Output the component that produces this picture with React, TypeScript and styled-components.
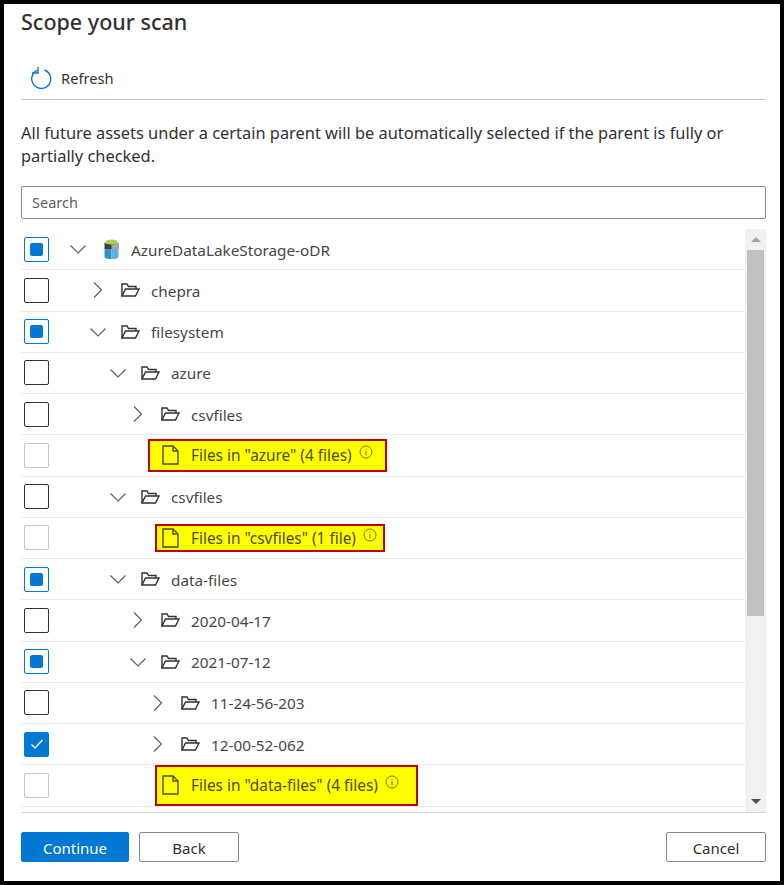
import React from "react";
import styled, { createGlobalStyle } from "styled-components";

const GlobalStyle = createGlobalStyle`
  html, body {
    margin: 0;
    padding: 0;
    background: #000;
  }
  body {
    font-family: "Noto Sans", "Open Sans", "Liberation Sans", sans-serif;
    color: #323130;
  }
`;

const Frame = styled.div`
  box-sizing: border-box;
  width: 784px;
  height: 885px;
  border: 4px solid #000;
  background: #fff;
  display: flex;
  flex-direction: column;
  padding: 0 14px 0 17px;
  overflow: hidden;
`;

const Title = styled.h1`
  margin: 0;
  height: 37px;
  font-size: 21.5px;
  line-height: 35px;
  font-weight: 500;
  color: #323130;
`;

const Toolbar = styled.div`
  display: flex;
  align-items: center;
  gap: 9px;
  height: 59px;
  padding: 16px 0 0 9px;
  border-bottom: 1px solid #c8c6c4;
  box-sizing: border-box;
  font-size: 14.7px;
  color: #323130;
`;

const Description = styled.p`
  margin: 21px 0 19px;
  font-size: 16.4px;
  line-height: 23px;
  color: #323130;
`;

const SearchInput = styled.div`
  box-sizing: border-box;
  height: 33px;
  border: 1px solid #8a8886;
  border-radius: 2px;
  padding-left: 10px;
  font-size: 14.5px;
  line-height: 31px;
  color: #605e5c;
`;

const TreeArea = styled.div`
  display: flex;
  margin-top: 10px;
  height: 583px;
`;

const Rows = styled.div`
  flex: 1;
`;

const Row = styled.div`
  box-sizing: border-box;
  height: 41.25px;
  border-bottom: 1px solid #edebe9;
  display: flex;
  align-items: center;
  padding-left: 3px;
`;

const Check = styled.span<{ $state: "off" | "partial" | "on" | "disabled" }>`
  box-sizing: border-box;
  flex: none;
  width: 25px;
  height: 25px;
  border-radius: 2px;
  display: flex;
  align-items: center;
  justify-content: center;
  border: 1px solid
    ${(p) =>
      p.$state === "off"
        ? "#323130"
        : p.$state === "disabled"
          ? "#c8c6c4"
          : "#0078d4"};
  background: ${(p) => (p.$state === "on" ? "#0078d4" : "#fff")};
`;

const PartialMark = styled.span`
  width: 13px;
  height: 13px;
  border-radius: 2px;
  background: #0078d4;
`;

const NodeBody = styled.div<{ $depth: number }>`
  display: flex;
  align-items: center;
  padding-left: ${(p) => 24 + p.$depth * 20}px;
  min-width: 0;
`;

const Toggle = styled.span`
  flex: none;
  width: 10px;
  height: 16px;
  margin-right: 18px;
  display: flex;
  align-items: center;
  justify-content: center;
  svg {
    flex: none;
  }
`;

const NodeLabel = styled.span`
  font-size: 15.3px;
  color: #484644;
  white-space: nowrap;
  padding-top: 1px;
`;

const Folder = styled(NodeLabel)`
  margin-left: 11px;
`;

const FilesBox = styled.div<{ $left: number; $width: number; $height: number; $pad: number }>`
  box-sizing: border-box;
  flex: none;
  margin-left: ${(p) => p.$left}px;
  width: ${(p) => p.$width}px;
  height: ${(p) => p.$height}px;
  border: 2px solid #c00000;
  background: #ffff00;
  display: flex;
  align-items: center;
  padding-left: ${(p) => p.$pad}px;
  gap: 12px;
`;

const FilesLabel = styled.span`
  font-size: 15.4px;
  color: #4c4c00;
  white-space: nowrap;
  padding-top: 1px;
`;

const InfoIcon = styled.svg`
  flex: none;
  margin: -6px 0 0 -5px;
`;

const LakeSvg = styled.svg`
  flex: none;
  margin: 0 1px 0 3px;
`;

const Scrollbar = styled.div`
  width: 21px;
  flex: none;
  background: #f1f1f1;
  display: flex;
  flex-direction: column;
  align-items: center;
`;

const ScrollArrow = styled.span<{ $down?: boolean }>`
  flex: none;
  height: 21px;
  display: flex;
  align-items: center;
  justify-content: center;
  width: 100%;
  &::before {
    content: "";
    border-left: 5px solid transparent;
    border-right: 5px solid transparent;
    ${(p) =>
      p.$down ? "border-top: 5px solid #505050;" : "border-bottom: 5px solid #a3a3a3;"}
  }
`;

const ScrollThumb = styled.div`
  width: 17px;
  height: 366px;
  background: #c1c1c1;
`;

const ScrollGap = styled.div`
  flex: 1;
`;

const Footer = styled.div`
  border-top: 1px solid #d6d6d6;
  display: flex;
  align-items: flex-start;
  gap: 10px;
  padding-top: 19px;
`;

const Button = styled.button<{ $primary?: boolean }>`
  box-sizing: border-box;
  height: 30px;
  width: ${(p) => (p.$primary ? 108 : 100)}px;
  border-radius: 2px;
  border: 1px solid ${(p) => (p.$primary ? "#0078d4" : "#8a8886")};
  background: ${(p) => (p.$primary ? "#0078d4" : "#fff")};
  color: ${(p) => (p.$primary ? "#fff" : "#323130")};
  font-family: inherit;
  font-size: 15px;
  padding: 2px 0 0;
`;

const CancelButton = styled(Button)`
  margin-left: auto;
`;

const Chevron = ({ open }: { open: boolean }) => (
  <svg width="16" height="16" viewBox="0 0 16 16" fill="none" stroke="#605e5c" strokeWidth="1.2">
    {open ? <path d="M.5 4.500l7.500 7.500 7.500-7.500" /> : <path d="M4 .5l7.500 7.500L4 15.500" />}
  </svg>
);

const FolderIcon = () => (
  <svg width="19" height="16" viewBox="0 0 19 16" fill="none" stroke="#323130" strokeWidth="1.4">
    <path d="M1 14V2h5l1.500 2.500H15V7" />
    <path d="M1 14h13.500L18 7H4.500L1 14z" />
  </svg>
);

const FileIcon = () => (
  <svg width="17" height="20" viewBox="0 0 17 20" fill="none" stroke="#4c4c00" strokeWidth="1.4">
    <path d="M1 1h10l5 5v13H1V1z" />
    <path d="M11 1v5h5" />
  </svg>
);

const Info = () => (
  <InfoIcon width="14" height="14" viewBox="0 0 14 14" fill="none" stroke="#75750a" strokeWidth="1">
    <circle cx="7" cy="7" r="6" />
    <path d="M7 6v4.200M7 3.800v1" />
  </InfoIcon>
);

const RefreshIcon = () => (
  <svg width="22" height="22" viewBox="0 0 22 22" fill="none" stroke="#0078d4" strokeWidth="1.4">
    <path d="M14.500 3A9.500 9.500 0 1 1 7 3.400" />
    <path d="M8 0v6H2" />
  </svg>
);

const LakeIcon = () => (
  <LakeSvg width="15" height="20" viewBox="0 0 15 20">
    <ellipse cx="7.500" cy="3" rx="6" ry="2.500" fill="#a8d23a" />
    <path d="M.5 3.500c2 2.500 12 2.500 14 0v7H.5z" fill="#3a3f45" />
    <path d="M7.500 5.500c3 0 6-.5 7-2v7h-7z" fill="#a5a8ab" />
    <path d="M.5 10.500h7V20C3.500 20 .5 19.500 .5 18z" fill="#2f8fcf" />
    <path d="M7.500 10.500h7V18c0 1.500-3 2-7 2z" fill="#5db2de" />
  </LakeSvg>
);

type Node =
  | { kind: "root"; label: string; check: "partial" }
  | { kind: "folder"; label: string; depth: number; open: boolean; check: "off" | "partial" | "on" }
  | { kind: "files"; label: string; left: number; width: number; height: number; pad: number };

const nodes: Node[] = [
  { kind: "root", label: "AzureDataLakeStorage-oDR", check: "partial" },
  { kind: "folder", label: "chepra", depth: 1, open: false, check: "off" },
  { kind: "folder", label: "filesystem", depth: 1, open: true, check: "partial" },
  { kind: "folder", label: "azure", depth: 2, open: true, check: "off" },
  { kind: "folder", label: "csvfiles", depth: 3, open: false, check: "off" },
  { kind: "files", label: 'Files in "azure" (4 files)', left: 99, width: 239, height: 33, pad: 12 },
  { kind: "folder", label: "csvfiles", depth: 2, open: true, check: "off" },
  { kind: "files", label: 'Files in "csvfiles" (1 file)', left: 106, width: 230, height: 28, pad: 5 },
  { kind: "folder", label: "data-files", depth: 2, open: true, check: "partial" },
  { kind: "folder", label: "2020-04-17", depth: 3, open: false, check: "off" },
  { kind: "folder", label: "2021-07-12", depth: 3, open: true, check: "partial" },
  { kind: "folder", label: "11-24-56-203", depth: 4, open: false, check: "off" },
  { kind: "folder", label: "12-00-52-062", depth: 4, open: false, check: "on" },
  { kind: "files", label: 'Files in "data-files" (4 files)', left: 106, width: 263, height: 41, pad: 5 },
];

const CheckBox = ({ state }: { state: "off" | "partial" | "on" | "disabled" }) => (
  <Check $state={state}>
    {state === "partial" && <PartialMark />}
    {state === "on" && (
      <svg width="14" height="12" viewBox="0 0 14 12" fill="none" stroke="#fff" strokeWidth="1.4">
        <path d="M1.500 6.500l3.500 3.500 7.500-8" />
      </svg>
    )}
  </Check>
);

const TreeRow = ({ node }: { node: Node }) => {
  if (node.kind === "files") {
    return (
      <Row>
        <CheckBox state="disabled" />
        <FilesBox $left={node.left} $width={node.width} $height={node.height} $pad={node.pad}>
          <FileIcon />
          <FilesLabel>{node.label}</FilesLabel>
          <Info />
        </FilesBox>
      </Row>
    );
  }
  if (node.kind === "root") {
    return (
      <Row>
        <CheckBox state={node.check} />
        <NodeBody $depth={0}>
          <Toggle>
            <Chevron open />
          </Toggle>
          <LakeIcon />
          <Folder>{node.label}</Folder>
        </NodeBody>
      </Row>
    );
  }
  return (
    <Row>
      <CheckBox state={node.check} />
      <NodeBody $depth={node.depth}>
        <Toggle>
          <Chevron open={node.open} />
        </Toggle>
        <FolderIcon />
        <Folder>{node.label}</Folder>
      </NodeBody>
    </Row>
  );
};

export default function App() {
  return (
    <Frame>
      <GlobalStyle />
      <Title>Scope your scan</Title>
      <Toolbar>
        <RefreshIcon />
        Refresh
      </Toolbar>
      <Description>
        All future assets under a certain parent will be automatically selected if the parent is
        fully or partially checked.
      </Description>
      <SearchInput>Search</SearchInput>
      <TreeArea>
        <Rows>
          {nodes.map((node, i) => (
            <TreeRow key={i} node={node} />
          ))}
        </Rows>
        <Scrollbar>
          <ScrollArrow />
          <ScrollThumb />
          <ScrollGap />
          <ScrollArrow $down />
        </Scrollbar>
      </TreeArea>
      <Footer>
        <Button $primary>Continue</Button>
        <Button>Back</Button>
        <CancelButton>Cancel</CancelButton>
      </Footer>
    </Frame>
  );
}
